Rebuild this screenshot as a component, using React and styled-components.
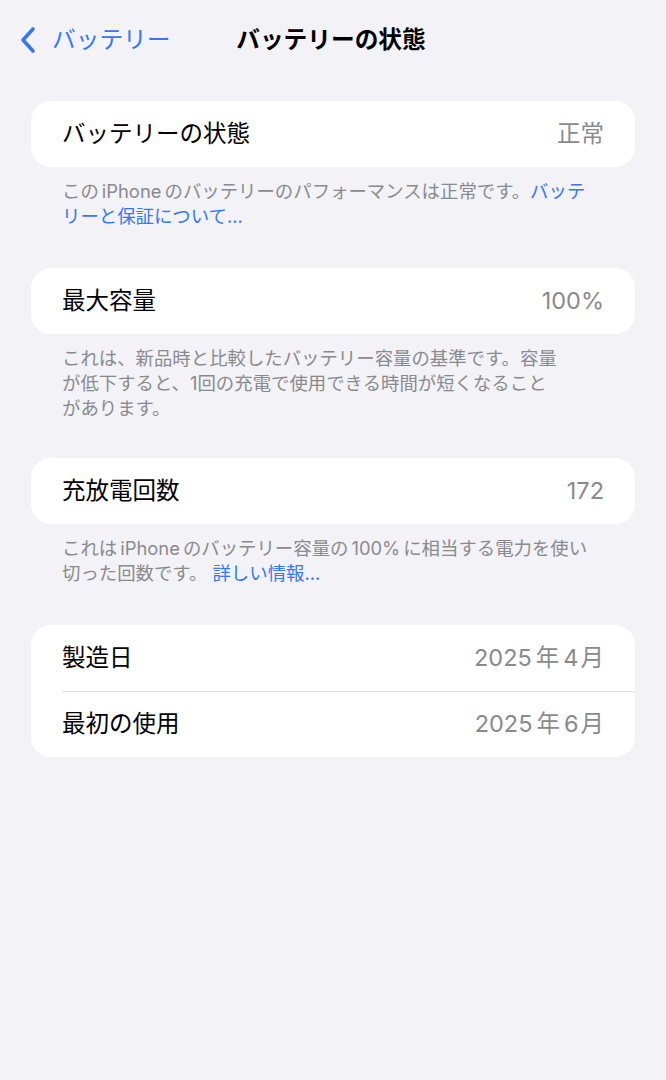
import React from "react";
import styled, { createGlobalStyle } from "styled-components";

const Global = createGlobalStyle`
  html, body {
    margin: 0;
    padding: 0;
    background: #f2f2f7;
  }
  body {
    font-family: "Inter", "Noto Sans CJK JP", sans-serif;
    -webkit-font-smoothing: antialiased;
  }
`;

const blue = "#3478f6";

const Screen = styled.div`
  min-height: 1080px;
  background: #f2f2f7;
  color: #000;
`;

const NavBar = styled.nav`
  position: relative;
  height: 80px;
  display: flex;
  align-items: center;
  justify-content: center;
`;

const BackButton = styled.a`
  position: absolute;
  left: 18px;
  top: 26px;
  display: flex;
  align-items: center;
  gap: 14px;
  color: ${blue};
  font-size: 23.7px;
  line-height: 28px;
  text-decoration: none;
`;

const Title = styled.h1`
  margin: 0 0 0 -4px;
  font-size: 23.7px;
  font-weight: 700;
  line-height: 28px;
`;

const Content = styled.main`
  padding: 21px 31px 0 31px;
`;

const Card = styled.section`
  background: #fff;
  border-radius: 20px;
  overflow: hidden;
`;

const Row = styled.div`
  height: 66px;
  display: flex;
  align-items: center;
  justify-content: space-between;
  padding: 0 31px;
  position: relative;

  & + &::before {
    content: "";
    position: absolute;
    top: 0;
    left: 31px;
    right: 0;
    height: 1px;
    background: #e3e3e8;
  }
`;

const Label = styled.span`
  font-size: 23.5px;
  line-height: 28px;
`;

const Value = styled.span`
  font-size: 23.5px;
  line-height: 28px;
  color: #8a8a8e;
`;

// thin gap between latin/digits and kana, like the system font does
const Gap = styled.span`
  display: inline-block;
  width: ${p => p.w || 3}px;
`;

const Footer = styled.p`
  margin: 12px 0 ${p => p.bottom || 39}px 31px;
  font-size: 18.4px;
  line-height: 25px;
  color: #8a8a8e;
`;

const Link = styled.a`
  color: ${blue};
  text-decoration: none;
`;

const Chevron = () => (
  <svg width="20" height="28" viewBox="0 0 20 28" fill="none">
    <path
      d="M15 3 L5 14 L15 25"
      stroke={blue}
      strokeWidth="3.6"
      strokeLinecap="round"
      strokeLinejoin="round"
    />
  </svg>
);

export default function App() {
  return (
    <Screen lang="ja">
      <Global />
      <NavBar>
        <BackButton href="#">
          <Chevron />
          バッテリー
        </BackButton>
        <Title>バッテリーの状態</Title>
      </NavBar>

      <Content>
        <Card>
          <Row>
            <Label>バッテリーの状態</Label>
            <Value>正常</Value>
          </Row>
        </Card>
        <Footer>
          この<Gap />iPhone<Gap />のバッテリーのパフォーマンスは正常です。<Link href="#">バッテ<br />リーと保証について...</Link>
        </Footer>

        <Card>
          <Row>
            <Label>最大容量</Label>
            <Value>100%</Value>
          </Row>
        </Card>
        <Footer bottom={37}>
          これは、新品時と比較したバッテリー容量の基準です。容量<br />
          が低下すると、1回の充電で使用できる時間が短くなること<br />
          があります。
        </Footer>

        <Card>
          <Row>
            <Label>充放電回数</Label>
            <Value>172</Value>
          </Row>
        </Card>
        <Footer>
          これは<Gap />iPhone<Gap />のバッテリー容量の<Gap />100%<Gap />に相当する電力を使い<br />
          切った回数です。 <Link href="#">詳しい情報...</Link>
        </Footer>

        <Card>
          <Row>
            <Label>製造日</Label>
            <Value>2025<Gap w={4} />年<Gap w={4} />4<Gap w={2} />月</Value>
          </Row>
          <Row>
            <Label>最初の使用</Label>
            <Value>2025<Gap w={4} />年<Gap w={4} />6<Gap w={2} />月</Value>
          </Row>
        </Card>
      </Content>
    </Screen>
  );
}
